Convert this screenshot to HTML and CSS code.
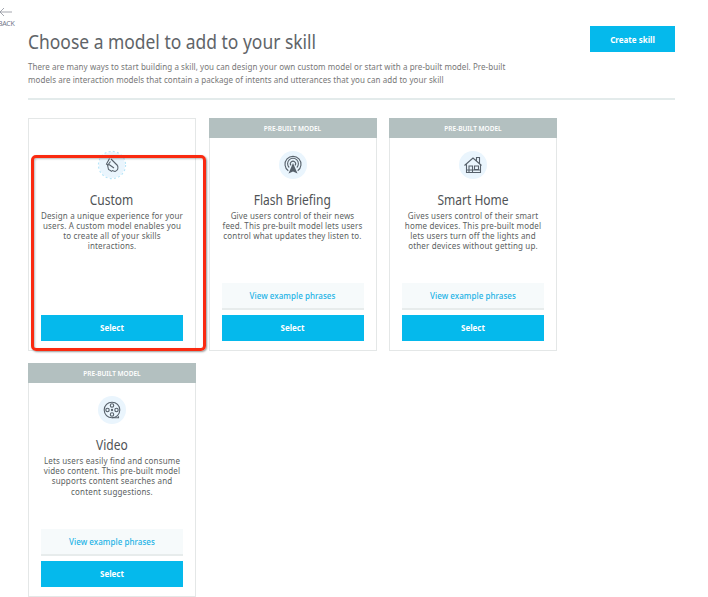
FILE: index.html
```html
<!DOCTYPE html>
<html lang="en">
<head>
<meta charset="utf-8">
<title>Choose a model</title>
<link rel="stylesheet" href="styles.css">
</head>
<body>
<a class="back">
  <svg class="back-arrow" viewBox="0 0 14 10"><path d="M14 5H2M6 1L2 5l4 4"/></svg>
  <span>BACK</span>
</a>
<main class="page">
  <header class="header">
    <div class="intro">
      <h1>Choose a model to add to your skill</h1>
      <p>There are many ways to start building a skill, you can design your own custom model or start with a pre-built model. Pre-built<br>models are interaction models that contain a package of intents and utterances that you can add to your skill</p>
    </div>
    <button class="button create">Create skill</button>
  </header>
  <section class="grid">
    <article class="card custom">
      <div class="tag"></div>
      <svg class="icon" viewBox="0 0 30 30">
        <circle class="disc" cx="15" cy="15" r="13"/>
        <circle class="dashes" cx="15" cy="15" r="13.6"/>
        <path d="M12.500 8.500L9.500 14l2 1.500M14 9l6.500 6.500M10.500 15l1 4.500 3.500 2M13.500 11.500l-3 4M12 14.500l5 3.500M20.500 15.500c1 2.500 0 5-2.500 6l-3-1"/>
      </svg>
      <h2>Custom</h2>
      <p>Design a unique experience for your<br>users. A custom model enables you<br>to create all of your skills<br>interactions.</p>
      <button class="button">Select</button>
      <div class="highlight"></div>
    </article>
    <article class="card">
      <div class="tag">PRE-BUILT MODEL</div>
      <svg class="icon" viewBox="0 0 30 30">
        <circle class="disc" cx="15" cy="15" r="14"/>
        <path d="M10.300 20.800a8 8 0 1 1 9.400 0M11.200 17.500a5.400 5.400 0 1 1 7.600 0M13 15.500a2.600 2.600 0 1 1 4 0"/>
        <path class="solid" d="M15 13l4.500 10.500-4.500-2-4.500 2z"/>
      </svg>
      <h2>Flash Briefing</h2>
      <p>Give users control of their news<br>feed. This pre-built model lets users<br>control what updates they listen to.</p>
      <a class="examples">View example phrases</a>
      <button class="button">Select</button>
    </article>
    <article class="card">
      <div class="tag">PRE-BUILT MODEL</div>
      <svg class="icon" viewBox="0 0 30 30">
        <circle class="disc" cx="15" cy="15" r="14"/>
        <path d="M6.500 15.500L15 8l8.500 7.500M8.500 14.500v8h14v-8M18.500 10.500V7.500h3v6M11 22v-6h3.500v6M16.500 16h4v3.500h-4zM9 20h13"/>
      </svg>
      <h2>Smart Home</h2>
      <p>Gives users control of their smart<br>home devices. This pre-built model<br>lets users turn off the lights and<br>other devices without getting up.</p>
      <a class="examples">View example phrases</a>
      <button class="button">Select</button>
    </article>
    <article class="card">
      <div class="tag">PRE-BUILT MODEL</div>
      <svg class="icon" viewBox="0 0 30 30">
        <circle class="disc" cx="15" cy="15" r="14"/>
        <circle cx="15" cy="15" r="7.800"/><circle cx="15" cy="10.500" r="1.700"/><circle cx="15" cy="19.500" r="1.700"/><circle cx="10.500" cy="15" r="1.700"/><circle cx="19.500" cy="15" r="1.700"/><circle cx="15" cy="15" r=".6"/>
        <path d="M15 22.800h6.500v-1.500"/>
      </svg>
      <h2>Video</h2>
      <p>Lets users easily find and consume<br>video content. This pre-built model<br>supports content searches and<br>content suggestions.</p>
      <a class="examples">View example phrases</a>
      <button class="button">Select</button>
    </article>
  </section>
</main>
</body>
</html>
```
FILE: styles.css
```css
* { box-sizing: border-box; }
body {
  margin: 0;
  width: 708px;
  height: 597px;
  overflow: hidden;
  position: relative;
  background: #fff;
  color: #5a6066;
  font-family: "Noto Sans", "Open Sans", sans-serif;
}
h1, h2, p { margin: 0; font-weight: 400; }
.back {
  position: absolute;
  left: -2px;
  top: 7px;
  font-size: 7px;
  line-height: 9px;
  letter-spacing: -.3px;
  color: #73768a;
}
.back-arrow {
  display: block;
  width: 14px;
  height: 10px;
  margin-bottom: 2px;
  fill: none;
  stroke: #8d909a;
  stroke-width: .8;
}
.page { padding: 26px 33px 0 28px; }
.header {
  display: flex;
  justify-content: space-between;
  align-items: flex-start;
  height: 74px;
  border-bottom: 2px solid #e3ebeb;
}
.intro { white-space: nowrap; }
h1 {
  font-size: 20px;
  line-height: 32px;
  transform: scaleX(.872);
  transform-origin: left;
  width: 335px;
  color: #606468;
}
.intro p {
  margin-top: 3px;
  font-size: 8px;
  line-height: 12.500px;
  letter-spacing: .065px;
  color: #777;
}
.button {
  display: block;
  border: 0;
  padding: 0;
  height: 26px;
  background: #05b9ec;
  color: #fff;
  font: 700 8px/26px "Noto Sans", sans-serif;
}
.create { width: 85px; line-height: 25px; }
.grid {
  display: grid;
  grid-template-columns: repeat(3, 168px);
  grid-auto-rows: 233.500px;
  gap: 12px 12.500px;
  margin-top: 17.500px;
}
.card {
  position: relative;
  display: flex;
  flex-direction: column;
  align-items: center;
  border: 1px solid #e4e7e7;
  padding-bottom: 9px;
}
.tag {
  width: 168px;
  height: 20px;
  margin: -1px -1px 0;
  background: #b3c0c0;
  color: #fff;
  font-size: 6.500px;
  font-weight: 600;
  line-height: 21px;
  text-align: center;
}
.custom .tag { background: none; }
.icon {
  width: 30px;
  height: 30px;
  margin-top: 12px;
  fill: none;
  stroke: #57616b;
  stroke-width: 1.100;
}
.icon .disc { fill: #eaf5fd; stroke: none; }
.icon .dashes { stroke: #b6e5f8; stroke-dasharray: 2 2.300; }
.icon .solid { fill: #57616b; stroke: none; }
h2 {
  margin-top: 10px;
  font-size: 13.500px;
  line-height: 20px;
  transform: scaleX(.89);
  color: #505356;
}
.card p {
  margin-top: 1px;
  font-size: 8px;
  line-height: 10.200px;
  letter-spacing: .16px;
  text-align: center;
  white-space: nowrap;
  color: #5c5f62;
}
.card .button { width: 142px; margin-top: 5px; }
.custom .button { margin-top: auto; }
.examples {
  width: 142px;
  height: 27px;
  margin-top: auto;
  border-bottom: 2px solid #e7ecec;
  background: #f6fafb;
  color: #22b3e6;
  font-size: 8px;
  font-weight: 500;
  line-height: 25px;
  letter-spacing: .05px;
  text-align: center;
}
.highlight {
  position: absolute;
  left: 2px;
  top: 36px;
  width: 175px;
  height: 196px;
  border: 3px solid #fa2a10;
  border-radius: 5px;
  box-shadow: 1px 1px 2px #0006, inset 1px 1px 2px #0004;
  z-index: 1;
}
```
